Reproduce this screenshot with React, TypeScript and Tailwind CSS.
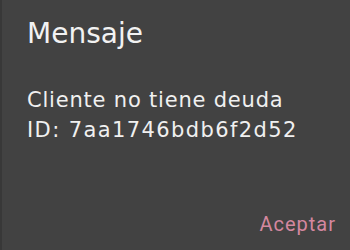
import React from 'react';

const App: React.FC = () => {
  return (
    <div className="w-[350px] h-[250px] bg-[#424242] border-l-2 border-[#383838] flex flex-col overflow-hidden">
      <h1 className="pl-[25px] pt-[14px] text-[28px] leading-[40px] text-[#f2f2f2] font-['DejaVu_Sans',sans-serif]">
        Mensaje
      </h1>
      <div className="pl-[25px] pt-[31px] text-[21px] leading-[30px] tracking-[0.8px] text-[#f0f0f0] font-['DejaVu_Sans',sans-serif]">
        <p>Cliente no tiene deuda</p>
        <p className="tracking-[1.4px]">ID: 7aa1746bdb6f2d52</p>
      </div>
      <div className="mt-auto flex justify-end pr-[14px] pb-[12px]">
        <button className="text-[20px] leading-[28px] tracking-[1px] text-[#d4879f] font-['Roboto',sans-serif]">Aceptar</button>
      </div>
    </div>
  );
};

export default App;
